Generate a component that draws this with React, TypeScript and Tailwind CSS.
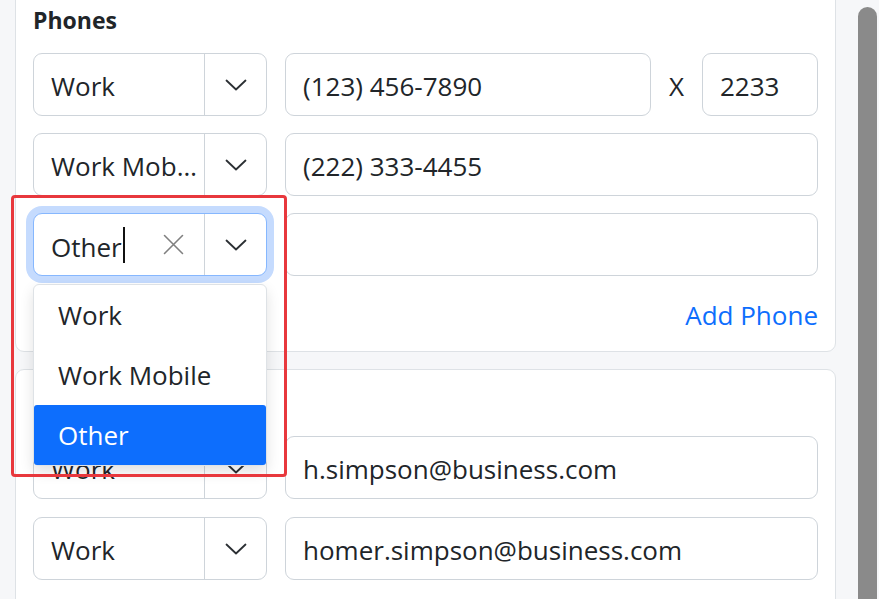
import React from 'react';

const Chevron: React.FC = () => (
  <svg width="22" height="12" viewBox="0 0 22 12" fill="none">
    <polyline points="1.5,1.5 11,10.5 20.5,1.5" stroke="#2b2f33" strokeWidth="1.8" strokeLinecap="round" strokeLinejoin="round" />
  </svg>
);

const ClearIcon: React.FC = () => (
  <svg width="21" height="21" viewBox="0 0 21 21" fill="none">
    <path d="M1.5 1.5 L19.5 19.5 M19.5 1.5 L1.5 19.5" stroke="#808080" strokeWidth="1.6" strokeLinecap="round" />
  </svg>
);

type SelectProps = { value: string; focused?: boolean };

const TypeSelect: React.FC<SelectProps> = ({ value, focused = false }) => (
  <div
    className={`flex h-[63px] w-[234px] shrink-0 rounded-[9px] border bg-white ${
      focused ? 'border-[#86b7fe] shadow-[0_0_0_7px_#c5dbfe]' : 'border-[#ced4da]'
    }`}
  >
    <div className="flex min-w-0 flex-1 items-center pl-[17px] pt-[4px]">
      {focused ? (
        <>
          <span className="leading-none">{value}</span>
          <span className="ml-px mb-[3px] h-[36px] w-[2px] bg-[#111]" />
        </>
      ) : (
        <span className="truncate pr-[6px]">{value}</span>
      )}
    </div>
    {focused && (
      <div className="flex w-[62px] items-center justify-center">
        <ClearIcon />
      </div>
    )}
    <div className="flex w-[62px] items-center justify-center border-l border-[#ced4da]">
      <Chevron />
    </div>
  </div>
);

const TextBox: React.FC<{ value?: string; className?: string }> = ({ value = '', className = '' }) => (
  <div className={`flex h-[63px] items-center rounded-[9px] border border-[#ced4da] bg-white pl-[17px] pt-[4px] ${className}`}>
    {value}
  </div>
);

const options = ['Work', 'Work Mobile', 'Other'];

export default function App() {
  return (
    <div className="relative flex h-[599px] w-[879px] overflow-hidden bg-[#f6f7f9] font-['Open_Sans','Noto_Sans',sans-serif] text-[26px] text-[#212529]">
      <div className="w-[836px] shrink-0 pl-[15px]">
        {/* phones */}
        <section className="mt-[-14px] rounded-[9px] border border-[#dee2e6] bg-white px-[17px] pt-[16px] pb-[16px]">
          <h3 className="mb-[16px] text-[23px] font-bold leading-[34px]">Phones</h3>
          <div className="flex flex-col gap-[17px]">
            <div className="flex">
              <TypeSelect value="Work" />
              <TextBox value="(123) 456-7890" className="ml-[18px] flex-1" />
              <div className="flex w-[51px] items-center justify-center pt-[4px]">X</div>
              <TextBox value="2233" className="w-[116px]" />
            </div>
            <div className="flex gap-[18px]">
              <TypeSelect value="Work Mobile" />
              <TextBox value="(222) 333-4455" className="flex-1" />
            </div>
            <div className="flex gap-[18px]">
              <div className="relative z-10">
                <TypeSelect value="Other" focused />
                <ul className="absolute left-0 top-[calc(100%+8px)] w-[234px] rounded-[6px] border border-[#dee2e6] bg-white shadow-[0_6px_14px_rgba(0,0,0,0.12)]">
                  {options.map((o) => (
                    <li
                      key={o}
                      className={`flex h-[60px] items-center rounded-[3px] pl-[24px] ${
                        o === 'Other' ? 'bg-[#0d6efd] text-white' : ''
                      }`}
                    >
                      {o}
                    </li>
                  ))}
                </ul>
              </div>
              <TextBox className="flex-1" />
            </div>
          </div>
          <div className="mt-[20px] flex justify-end">
            <a className="leading-[39px] text-[#0d6efd]">Add Phone</a>
          </div>
        </section>

        {/* emails: heading sits under the open menu */}
        <section className="mt-[17px] rounded-[9px] border border-[#dee2e6] bg-white px-[17px] pt-[16px] pb-[60px]">
          <div className="mb-[16px] h-[34px]" />
          <div className="flex flex-col gap-[18px]">
            <div className="flex gap-[18px]">
              <TypeSelect value="Work" />
              <TextBox value="h.simpson@business.com" className="flex-1" />
            </div>
            <div className="flex gap-[18px]">
              <TypeSelect value="Work" />
              <TextBox value="homer.simpson@business.com" className="flex-1" />
            </div>
          </div>
        </section>
      </div>

      {/* scrollbar */}
      <div className="w-[43px] shrink-0 pl-[22px] pr-[2px] pt-[7px]">
        <div className="h-[800px] w-[19px] rounded-full bg-[#8a8a8a]" />
      </div>

      {/* annotation */}
      <div className="pointer-events-none absolute left-[11px] top-[195px] z-20 h-[282px] w-[276px] rounded-[4px] border-[3px] border-[#e8383d]" />
    </div>
  );
}
